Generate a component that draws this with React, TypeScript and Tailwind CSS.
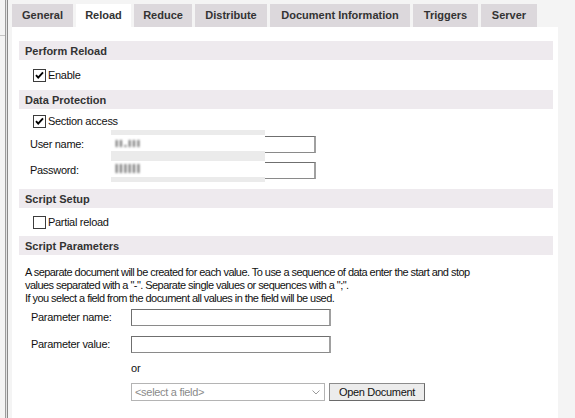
import React from "react";

const font = { fontFamily: '"Liberation Sans", Arial, sans-serif' };

const tabs = [
  { label: "General", w: "w-[61px]" },
  { label: "Reload", w: "w-[55px]", active: true },
  { label: "Reduce", w: "w-[58px]" },
  { label: "Distribute", w: "w-[72px]" },
  { label: "Document Information", w: "w-[140px]" },
  { label: "Triggers", w: "w-[65px]" },
  { label: "Server", w: "w-[56px]" },
];

function Check({ checked }: { checked?: boolean }) {
  return (
    <svg width="13" height="13" viewBox="0 0 13 13" className="shrink-0">
      <rect x="0.5" y="0.5" width="12" height="12" fill="#fff" stroke="#3c3c3c" />
      {checked && (
        <path d="M3 6.2 L5.2 8.6 L10 3.4" fill="none" stroke="#000" strokeWidth="1.9" />
      )}
    </svg>
  );
}

function Header({ children }: { children: React.ReactNode }) {
  return (
    <div className="h-[19px] bg-[#eeeaee] flex items-center pl-[6px] pt-[1px] text-[11px] font-bold text-[#333]">
      {children}
    </div>
  );
}

function CheckRow({ label, checked, h }: { label: string; checked?: boolean; h: string }) {
  return (
    <div className={`${h} flex items-center pl-[14px] text-[11px] text-[#111]`}>
      <Check checked={checked} />
      <span className="ml-[2px] tracking-[-0.3px]">{label}</span>
    </div>
  );
}

function Input({ w }: { w: string }) {
  return (
    <div
      className={`${w} h-[17px] bg-white border-t border-l border-[#6f6f6f] border-r-2 border-b border-r-[#a0a0a0] border-b-[#8a8a8a]`}
    />
  );
}

// blurred-out credential (as in the screenshot)
function Blurred({ text }: { text: string }) {
  return (
    <div className="h-[26px] flex flex-col">
      <div className="h-[5px] bg-[#ebebeb]" />
      <div className="h-[16px] bg-white flex items-center pl-[4px]">
        <span className="blur-[1.1px] text-[12px] font-bold text-[#555] tracking-[1px]">{text}</span>
      </div>
      <div className="h-[5px] bg-[#ebebeb]" />
    </div>
  );
}

export default function App() {
  return (
    <div className="w-[575px] h-[418px] bg-[#f4f4f4] flex overflow-hidden" style={font}>
      {/* left frame edge */}
      <div className="w-[12px] flex shrink-0">
        <div className="w-[5px]">
          <div className="h-[36px] border-b border-[#c4c4c4]" />
        </div>
        <div className="w-[1px] bg-[#9c9c9c]" />
        <div className="w-[1px] bg-[#e4e4e4]" />
        <div className="w-[1px] bg-[#8a8a8a]" />
      </div>

      <div className="w-[546px] flex flex-col">
        {/* tabs */}
        <div className="flex gap-[3px] pt-[4px] h-[27px]">
          {tabs.map((t) => (
            <div
              key={t.label}
              className={`${t.w} h-[23px] flex justify-center pt-[3px] text-[11px] font-bold text-[#333] ${
                t.active ? "bg-white" : "bg-[#dcd8dc]"
              }`}
            >
              {t.label}
            </div>
          ))}
        </div>

        {/* panel */}
        <div className="flex-1 bg-white pt-[14px] pl-[7px] pr-[5px] flex flex-col text-[11px] text-[#111]">
          <Header>Perform Reload</Header>
          <CheckRow label="Enable" checked h="h-[30px]" />

          <Header>Data Protection</Header>
          <CheckRow label="Section access" checked h="h-[25px]" />
          <div className="relative">
            <div className="h-[19px] flex items-center mt-[1px]">
              <span className="w-[92px] pl-[11px] tracking-[-0.3px]">User name:</span>
              <Input w="w-[205px]" />
            </div>
            <div className="h-[19px] flex items-center mt-[7px]">
              <span className="w-[92px] pl-[11px] tracking-[-0.3px]">Password:</span>
              <Input w="w-[205px]" />
            </div>
            <div className="absolute left-[92px] top-[-4px] w-[154px] flex flex-col">
              <Blurred text="ıı.ııı" />
              <Blurred text="IIIIII" />
            </div>
          </div>

          <div className="mt-[9px]">
            <Header>Script Setup</Header>
          </div>
          <CheckRow label="Partial reload" h="h-[28px]" />

          <Header>Script Parameters</Header>
          <div className="mt-[11px] pl-[6px] leading-[13px] tracking-[-0.55px]">
            <div>
              A separate document will be created for each value. To use a sequence of data enter the start and stop
            </div>
            <div>values separated with a "-". Separate single values or sequences with a ";".</div>
            <div>If you select a field from the document all values in the field will be used.</div>
          </div>

          <div className="h-[19px] flex items-center mt-[3px]">
            <span className="w-[112px] pl-[12px] tracking-[-0.3px]">Parameter name:</span>
            <Input w="w-[200px]" />
          </div>
          <div className="h-[19px] flex items-center mt-[8px]">
            <span className="w-[112px] pl-[12px] tracking-[-0.3px]">Parameter value:</span>
            <Input w="w-[200px]" />
          </div>
          <div className="pl-[112px] mt-[8px] h-[13px] leading-[13px]">or</div>
          <div className="pl-[112px] mt-[8px] flex items-center gap-[4px]">
            <div className="w-[194px] h-[18px] border border-[#b4b4b4] bg-white flex items-center justify-between pl-[3px] pr-[4px] text-[#8a8a8a]">
              <span className="tracking-[-0.3px]">&lt;select a field&gt;</span>
              <svg width="8" height="5" viewBox="0 0 8 5">
                <path d="M0.5 0.5 L4 4 L7.5 0.5" fill="none" stroke="#9a9a9a" strokeWidth="1" />
              </svg>
            </div>
            <div className="w-[96px] h-[18px] bg-[#ececec] border border-[#8c8c8c] border-r-[#6a6a6a] border-b-[#6a6a6a] flex items-center justify-center text-[#111] tracking-[-0.3px]">
              Open Document
            </div>
          </div>
        </div>
      </div>
    </div>
  );
}
